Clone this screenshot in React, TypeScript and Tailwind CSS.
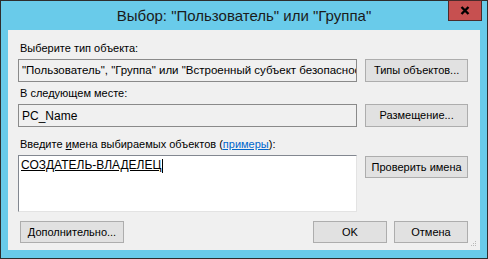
import React from 'react';

const font = { fontFamily: '"Liberation Sans", Arial, sans-serif' };

function Btn({ children, className = '' }: { children: React.ReactNode; className?: string }) {
  return (
    <div
      className={`flex items-center justify-center bg-[#e1e1e1] border border-[#adadad] text-[11px] leading-none text-black ${className}`}
    >
      {children}
    </div>
  );
}

export default function App() {
  return (
    <div className="w-[488px] h-[259px] bg-[#69cbea] border border-[#2e2e2e] flex flex-col" style={font}>
      {/* Title bar */}
      <div className="h-[29px] grid grid-cols-[1fr_auto_1fr]">
        <div />
        <div className="pt-[6px] text-[15px] leading-[18px] text-[#1b1b1b] whitespace-nowrap">
          Выбор: "Пользователь" или "Группа"
        </div>
        <div className="flex justify-end pr-[5px]">
          <div className="w-[34px] h-[21px] -mt-px bg-[#c75050] border border-[#4b2b2b] flex items-center justify-center">
            <svg width="10" height="9" viewBox="0 0 10 9">
              <path d="M1.5 1 L8.5 8 M8.5 1 L1.5 8" stroke="#000" strokeWidth="2.4" />
            </svg>
          </div>
        </div>
      </div>

      {/* Client area */}
      <div className="relative mx-[7px] h-[220px] bg-[#f0f0f0] pl-[10px] pr-[12px] flex flex-col text-[11px] text-black">
        <div className="mt-[12px] h-[13px] leading-[13px] pl-[2px]">Выберите тип объекта:</div>
        <div className="mt-[4px] h-[23px] flex gap-[8px]">
          <div className="w-[340px] h-full border border-[#8a8a8a] bg-[#f0f0f0] flex items-center pl-[3px] overflow-hidden whitespace-nowrap text-[11.5px]">
            "Пользователь", "Группа" или "Встроенный субъект безопасности"
          </div>
          <Btn className="w-[103px] h-full">Типы объектов...</Btn>
        </div>

        <div className="mt-[5px] h-[13px] leading-[13px] pl-[2px]">В следующем месте:</div>
        <div className="mt-[4px] h-[23px] flex gap-[8px]">
          <div className="w-[340px] h-full border border-[#8a8a8a] bg-[#f0f0f0] flex items-center pl-[3px] overflow-hidden whitespace-nowrap text-[12px]">
            PC_Name
          </div>
          <Btn className="w-[103px] h-full">Размещение...</Btn>
        </div>

        <div className="mt-[11px] h-[13px] leading-[13px] pl-[2px] whitespace-nowrap">
          Введите <span className="underline">и</span>мена выбираемых объектов (
          <span className="text-[#0066cc] underline">примеры</span>):
        </div>
        <div className="mt-[4px] h-[57px] flex gap-[8px]">
          <div className="w-[340px] h-full bg-white border border-t-[#828790] border-l-[#828790] border-r-[#e3e3e3] border-b-[#e3e3e3] pl-[2px] pt-[2px]">
            <div className="flex items-center h-[15px]">
              <span className="underline text-[12px] leading-[15px]">СОЗДАТЕЛЬ-ВЛАДЕЛЕЦ</span>
              <span className="w-px h-[14px] bg-black ml-[1px]" />
            </div>
          </div>
          <Btn className="w-[103px] h-[22px] mt-px">Проверить имена</Btn>
        </div>

        <div className="mt-[9px] h-[22px] flex">
          <Btn className="w-[104px] h-full ml-[2px]">Дополнительно...</Btn>
          <div className="flex-1" />
          <Btn className="w-[74px] h-full border-[#3c7fb1]">OK</Btn>
          <Btn className="w-[74px] h-full ml-[7px]">Отмена</Btn>
        </div>

        {/* size grip */}
        <svg className="absolute right-[3px] bottom-[2px]" width="7" height="7" viewBox="0 0 7 7">
          <rect x="5" y="0" width="1" height="1" fill="#b8b8b8" />
          <rect x="3" y="2" width="1" height="1" fill="#b8b8b8" />
          <rect x="5" y="2" width="1" height="1" fill="#b8b8b8" />
          <rect x="1" y="4" width="1" height="1" fill="#b8b8b8" />
          <rect x="3" y="4" width="1" height="1" fill="#b8b8b8" />
          <rect x="5" y="4" width="1" height="1" fill="#b8b8b8" />
        </svg>
      </div>
    </div>
  );
}
